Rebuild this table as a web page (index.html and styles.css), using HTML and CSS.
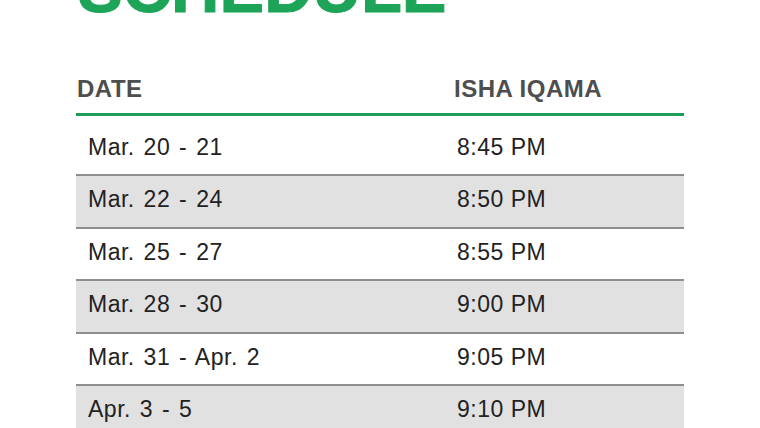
FILE: index.html
```html
<!DOCTYPE html>
<html>
<head>
<meta charset="utf-8">
<link rel="stylesheet" href="styles.css">
</head>
<body>
<div class="page">
  <h1 class="title">SCHEDULE</h1>
  <div class="head">
    <div class="hcell">DATE</div>
    <div class="hcell">ISHA IQAMA</div>
  </div>
  <div class="rows">
    <div class="row"><div class="c date">Mar. 20 - 21</div><div class="c">8:45 PM</div></div>
    <div class="row alt"><div class="c date">Mar. 22 - 24</div><div class="c">8:50 PM</div></div>
    <div class="row"><div class="c date">Mar. 25 - 27</div><div class="c">8:55 PM</div></div>
    <div class="row alt"><div class="c date">Mar. 28 - 30</div><div class="c">9:00 PM</div></div>
    <div class="row"><div class="c date">Mar. 31 - Apr. 2</div><div class="c">9:05 PM</div></div>
    <div class="row alt"><div class="c date">Apr. 3 - 5</div><div class="c">9:10 PM</div></div>
  </div>
</div>
</body>
</html>
```
FILE: styles.css
```css
html, body {
  margin: 0;
  padding: 0;
  background: #ffffff;
  overflow: hidden;
}
body {
  font-family: "Liberation Sans", Arial, sans-serif;
}
.page {
  width: 608px;
  padding: 0 76px;
}
.title {
  margin: -45px 0 0 0;
  font-size: 67px;
  line-height: 67px;
  font-weight: 700;
  color: #1da458;
  letter-spacing: 0;
  padding-left: 2px;
  -webkit-text-stroke: 1px #1da458;
}
.head {
  display: grid;
  grid-template-columns: 377px 1fr;
  margin-top: 54.8px;
  padding: 0 0 12px 1px;
  border-bottom: 3px solid #1f9e57;
  font-size: 24px;
  line-height: 24px;
  font-weight: 700;
  color: #4e4e4e;
  letter-spacing: 0.5px;
}
.rows {
  padding-top: 8px;
}
.row {
  display: grid;
  grid-template-columns: 369px 1fr;
  padding: 2px 0 5px 12px;
  height: 43.5px;
  line-height: 43.5px;
  border-bottom: 2px solid #8e8e8e;
  font-size: 23px;
  color: #222222;
  letter-spacing: 0.5px;
}
.date {
  word-spacing: 2px;
}
.row.alt {
  background: #e1e1e1;
}
```
